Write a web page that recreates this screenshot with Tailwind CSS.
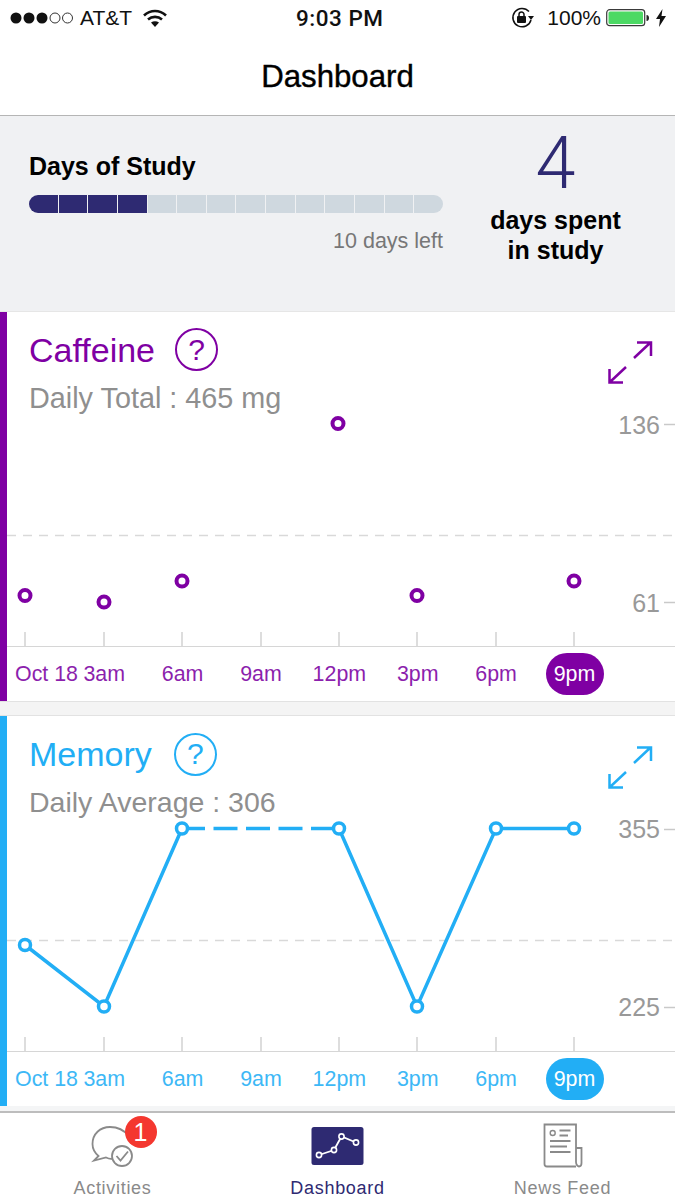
<!DOCTYPE html>
<html lang="en">
<head>
  <meta charset="UTF-8">
  <title>Dashboard</title>
  <script src="https://cdn.jsdelivr.net/npm/@tailwindcss/browser@4"></script>
</head>
<body class="bg-white font-['Liberation_Sans',sans-serif] overflow-hidden">
<div class="w-[675px] h-[1200px] flex flex-col overflow-hidden bg-[#f4f5f6]">

  <!-- Status bar -->
  <div class="h-[36px] bg-white flex items-center justify-between relative text-[21px] text-[#111]">
    <div class="flex items-center pl-[10px]">
      <svg width="64" height="14" viewBox="0 0 64 14">
        <circle cx="6" cy="7" r="5.5" fill="#111"/>
        <circle cx="19" cy="7" r="5.5" fill="#111"/>
        <circle cx="32" cy="7" r="5.5" fill="#111"/>
        <circle cx="45" cy="7" r="5" fill="none" stroke="#333" stroke-width="1"/>
        <circle cx="57.5" cy="7" r="5" fill="none" stroke="#333" stroke-width="1"/>
      </svg>
      <span class="ml-[6px]">AT&amp;T</span>
      <svg class="ml-[11px]" width="24" height="18" viewBox="0 0 24 18">
        <path d="M1 6.5C7.5 .5 16.5 .5 23 6.5" fill="none" stroke="#111" stroke-width="2.6"/>
        <path d="M5 10.5C9 7 15 7 19 10.5" fill="none" stroke="#111" stroke-width="2.6"/>
        <path d="M8 13.6C10.5 11.8 13.5 11.8 16 13.6L12 18Z" fill="#111"/>
      </svg>
    </div>
    <span class="absolute left-[296px] top-[2px] text-[22.5px] tracking-[0.5px] font-['Roboto',sans-serif] font-medium">9:03 PM</span>
    <div class="flex items-center pr-[9px]">
      <svg width="24" height="22" viewBox="0 0 24 22">
        <path d="M18 4.5A9.2 9.2 0 1 0 20 13" fill="none" stroke="#111" stroke-width="1.5"/>
        <path d="M23 9l-3 4-3-4Z" fill="#111"/>
        <rect x="6" y="9" width="9" height="7" rx="1" fill="#111"/>
        <path d="M8 9V7.500a2.500 2.500 0 0 1 5 0V9" fill="none" stroke="#111" stroke-width="1.500"/>
      </svg>
      <span class="ml-[12px]">100%</span>
      <svg class="ml-[5px]" width="44" height="18" viewBox="0 0 44 18">
        <rect x="0.700" y="0.700" width="38" height="16" rx="3" fill="none" stroke="#3a3a3a" stroke-width="1.200"/>
        <rect x="2.500" y="2.500" width="34.500" height="12.500" rx="1.500" fill="#4cd964"/>
        <path d="M40.500 6c2 0 2.500 1.500 2.500 3s-.5 3-2.500 3Z" fill="#222"/>
      </svg>
      <svg class="ml-[6px]" width="10" height="18" viewBox="0 0 10 18">
        <path d="M6.500 0 0 10h4l-1 8 7-11H5.500Z" fill="#111"/>
      </svg>
    </div>
  </div>

  <!-- Nav -->
  <div class="h-[80px] bg-white border-b border-[#b5b5b5] flex items-center justify-center">
    <h1 class="text-[31.200px] leading-none text-black mt-[3px] [-webkit-text-stroke:0.4px_#000]">Dashboard</h1>
  </div>

  <!-- Days of study -->
  <div class="h-[195px] bg-[#f0f1f3] flex shrink-0">
    <div class="w-[443px] pl-[29px] pt-[35px] shrink-0">
      <div class="text-[25px] leading-[30px] font-bold text-black">Days of Study</div>
      <div class="mt-[14px] h-[18px] flex gap-[1px] rounded-full overflow-hidden">
        <div class="flex-1 bg-[#2e2a72]"></div>
        <div class="flex-1 bg-[#2e2a72]"></div>
        <div class="flex-1 bg-[#2e2a72]"></div>
        <div class="flex-1 bg-[#2e2a72]"></div>
        <div class="flex-1 bg-[#cfd8df]"></div>
        <div class="flex-1 bg-[#cfd8df]"></div>
        <div class="flex-1 bg-[#cfd8df]"></div>
        <div class="flex-1 bg-[#cfd8df]"></div>
        <div class="flex-1 bg-[#cfd8df]"></div>
        <div class="flex-1 bg-[#cfd8df]"></div>
        <div class="flex-1 bg-[#cfd8df]"></div>
        <div class="flex-1 bg-[#cfd8df]"></div>
        <div class="flex-1 bg-[#cfd8df]"></div>
        <div class="flex-1 bg-[#cfd8df]"></div>
      </div>
      <div class="mt-[16px] text-right text-[21.500px] leading-[24px] text-[#777]">10 days left</div>
    </div>
    <div class="flex-1 flex flex-col items-center pr-[7px]">
      <div class="mt-[8px] h-[80px] text-[72px] leading-[80px] text-[#2e2a72] font-['Roboto',sans-serif] font-light">4</div>
      <div class="mt-[1px] text-[25px] leading-[30px] font-bold text-black text-center">days spent<br>in study</div>
    </div>
  </div>

  <!-- Caffeine -->
  <div class="h-[390px] shrink-0 bg-white border-t border-[#e6e6e6] relative flex">
    <div class="w-[7px] bg-[#7f00a3] shrink-0"></div>
    <svg class="absolute left-0 top-[-1px]" width="675" height="391" viewBox="0 311 675 391" fill="none">
      <path d="M7 535.500H675" stroke="#d9d9d9" stroke-width="1.500" stroke-dasharray="9 7"/>
      <path d="M664 424.500H675M664 602.500H675" stroke="#c9c9c9" stroke-width="1.500"/>
      <path d="M25 632V646M104 632V646M182 632V646M261 632V646M339 632V646M417 632V646M496 632V646M574 632V646" stroke="#d2d2d2" stroke-width="1.500"/>
      <g stroke="#7f00a3" stroke-width="4" fill="#fff">
        <circle cx="25" cy="595.500" r="5.500"/>
        <circle cx="104" cy="602" r="5.500"/>
        <circle cx="182" cy="581" r="5.500"/>
        <circle cx="338" cy="423.500" r="5.500"/>
        <circle cx="417" cy="595.500" r="5.500"/>
        <circle cx="574" cy="581" r="5.500"/>
      </g>
      <g stroke="#7f00a3" stroke-width="2.500">
        <path d="M634 358L650.500 342.500M637 342.500H651V356"/>
        <path d="M626 367L610 382M609.500 369V382.500H623"/>
      </g>
    </svg>
    <span class="absolute right-[15px] top-[99px] text-[25px] leading-[28px] text-[#999]">136</span>
    <span class="absolute right-[15px] top-[277px] text-[25px] leading-[28px] text-[#999]">61</span>
    <div class="flex-1 flex flex-col relative">
      <div class="pl-[22px] pt-[15px] flex items-center h-[60px]">
        <span class="text-[34px] leading-[40px] text-[#7f00a3]">Caffeine</span>
        <span class="ml-[20px] w-[43px] h-[43px] rounded-full border-2 border-[#7f00a3] flex items-center justify-center text-[30px] leading-none text-[#7f00a3]">?</span>
      </div>
      <div class="pl-[22px] mt-[9px] text-[28.800px] leading-[34px] text-[#8f8f8f]">Daily Total : 465 mg</div>
      <div class="mt-auto h-[55px] border-t border-[#d6d6d6] flex items-center pl-[8px] text-[21.400px] text-[#8c1fad] whitespace-nowrap">
        <span class="w-[50px]">Oct 18</span>
        <span class="w-[78.400px] text-center">3am</span>
        <span class="w-[78.400px] text-center">6am</span>
        <span class="w-[78.400px] text-center">9am</span>
        <span class="w-[78.400px] text-center">12pm</span>
        <span class="w-[78.400px] text-center">3pm</span>
        <span class="w-[78.400px] text-center">6pm</span>
        <span class="w-[78.400px] flex justify-center"><span class="w-[58px] h-[42px] rounded-full bg-[#7f00a3] text-white flex items-center justify-center">9pm</span></span>
      </div>
    </div>
  </div>

  <div class="h-[15px] shrink-0 bg-[#f4f4f4] border-t border-b border-[#e2e2e2]"></div>

  <!-- Memory -->
  <div class="h-[390px] shrink-0 bg-white relative flex">
    <div class="w-[7px] bg-[#22aef5] shrink-0"></div>
    <svg class="absolute left-0 top-0" width="675" height="390" viewBox="0 716 675 390" fill="none">
      <path d="M7 940.500H675" stroke="#d9d9d9" stroke-width="1.500" stroke-dasharray="9 7"/>
      <path d="M664 829.500H675M664 1007.500H675" stroke="#c9c9c9" stroke-width="1.500"/>
      <path d="M25 1037V1051M104 1037V1051M182 1037V1051M261 1037V1051M339 1037V1051M417 1037V1051M496 1037V1051M574 1037V1051" stroke="#d2d2d2" stroke-width="1.500"/>
      <g stroke="#22aef5" stroke-width="3.500">
        <path d="M25 945L104 1006.500L182 828.500"/>
        <path d="M182 828.500H339" stroke-dasharray="24 8.500" stroke-dashoffset="1"/>
        <path d="M339 828.500L417 1006.500L496 828.500H574"/>
      </g>
      <g stroke="#22aef5" stroke-width="3.500" fill="#fff">
        <circle cx="25" cy="945" r="5.500"/>
        <circle cx="104" cy="1006.500" r="5.500"/>
        <circle cx="182" cy="828.500" r="5.500"/>
        <circle cx="339" cy="828.500" r="5.500"/>
        <circle cx="417" cy="1006.500" r="5.500"/>
        <circle cx="496" cy="828.500" r="5.500"/>
        <circle cx="574" cy="828.500" r="5.500"/>
      </g>
      <g stroke="#22aef5" stroke-width="2.500">
        <path d="M634 763L650.500 747.500M637 747.500H651V761"/>
        <path d="M626 772L610 787M609.500 774V787.500H623"/>
      </g>
    </svg>
    <span class="absolute right-[15px] top-[99px] text-[25px] leading-[28px] text-[#999]">355</span>
    <span class="absolute right-[15px] top-[277px] text-[25px] leading-[28px] text-[#999]">225</span>
    <div class="flex-1 flex flex-col relative">
      <div class="pl-[22px] pt-[16px] flex items-center h-[60px]">
        <span class="text-[34px] leading-[40px] text-[#22aef5]">Memory</span>
        <span class="ml-[22px] w-[43px] h-[43px] rounded-full border-2 border-[#22aef5] flex items-center justify-center text-[30px] leading-none text-[#22aef5]">?</span>
      </div>
      <div class="pl-[22px] mt-[9px] text-[28.500px] leading-[34px] text-[#8f8f8f]">Daily Average : 306</div>
      <div class="mt-auto h-[55px] border-t border-[#d6d6d6] flex items-center pl-[8px] text-[21.400px] text-[#3db8f6] whitespace-nowrap">
        <span class="w-[50px]">Oct 18</span>
        <span class="w-[78.400px] text-center">3am</span>
        <span class="w-[78.400px] text-center">6am</span>
        <span class="w-[78.400px] text-center">9am</span>
        <span class="w-[78.400px] text-center">12pm</span>
        <span class="w-[78.400px] text-center">3pm</span>
        <span class="w-[78.400px] text-center">6pm</span>
        <span class="w-[78.400px] flex justify-center"><span class="w-[58px] h-[42px] rounded-full bg-[#22aef5] text-white flex items-center justify-center">9pm</span></span>
      </div>
    </div>
  </div>

  <!-- Tab bar -->
  <div class="mt-auto h-[89px] shrink-0 bg-white border-t-2 border-[#bdbdbd] grid grid-cols-3 text-[18px] leading-[22px] tracking-[0.7px]">
    <div class="flex flex-col items-center">
      <div class="relative w-[80px] h-[52px] mt-[7px]">
        <svg width="80" height="52" viewBox="72 1120 80 52" fill="none" stroke="#8a8a8a" stroke-width="1.800">
          <path d="M128 1136C123 1130 116 1127 109 1127C99 1127 91.500 1134 91.500 1144C91.500 1149 94 1153 97.500 1156L93 1160.500L105 1157.500C107 1158.500 109.500 1159 111 1158.800"/>
          <circle cx="121" cy="1156" r="10"/>
          <path d="M115.500 1156L119.500 1160.500L127 1151.500"/>
        </svg>
        <span class="absolute left-[52px] top-[-4px] w-[32px] h-[32px] rounded-full bg-[#f4372f] text-white text-[25px] tracking-normal flex items-center justify-center">1</span>
      </div>
      <span class="mt-[5px] text-[#8a8a8a]">Activities</span>
    </div>
    <div class="flex flex-col items-center">
      <div class="w-[80px] h-[52px] mt-[7px]">
        <svg width="80" height="52" viewBox="297 1120 80 52" fill="none">
          <rect x="310.500" y="1127" width="52" height="38" rx="2.500" fill="#2e2a72"/>
          <path d="M318 1155L333 1150L340.500 1136.500L355 1142.500" stroke="#fff" stroke-width="1.800"/>
          <g stroke="#fff" stroke-width="1.600" fill="#2e2a72">
            <circle cx="318" cy="1155" r="2.600"/>
            <circle cx="333" cy="1150" r="2.600"/>
            <circle cx="340.500" cy="1136.500" r="2.600"/>
            <circle cx="355" cy="1142.500" r="2.600"/>
          </g>
        </svg>
      </div>
      <span class="mt-[5px] text-[#2e2a72]">Dashboard</span>
    </div>
    <div class="flex flex-col items-center">
      <div class="w-[80px] h-[52px] mt-[7px]">
        <svg width="80" height="52" viewBox="522 1120 80 52" fill="none" stroke="#8a8a8a" stroke-width="1.800">
          <path d="M575 1166.500H546C544 1166.500 543.500 1165.500 543.500 1164V1124.500H575V1162C575 1165 577 1166.500 578 1166.500C579.500 1166.500 580.500 1165 580.500 1163V1148H575"/>
          <circle cx="551.700" cy="1133" r="2.500" stroke-width="1.400"/>
          <path d="M558.500 1130.500H569.500M558.500 1135.500H567M549 1141H569.500M549 1146.500H566M549 1152H569.500"/>
        </svg>
      </div>
      <span class="mt-[5px] text-[#8a8a8a]">News Feed</span>
    </div>
  </div>

</div>
</body>
</html>
